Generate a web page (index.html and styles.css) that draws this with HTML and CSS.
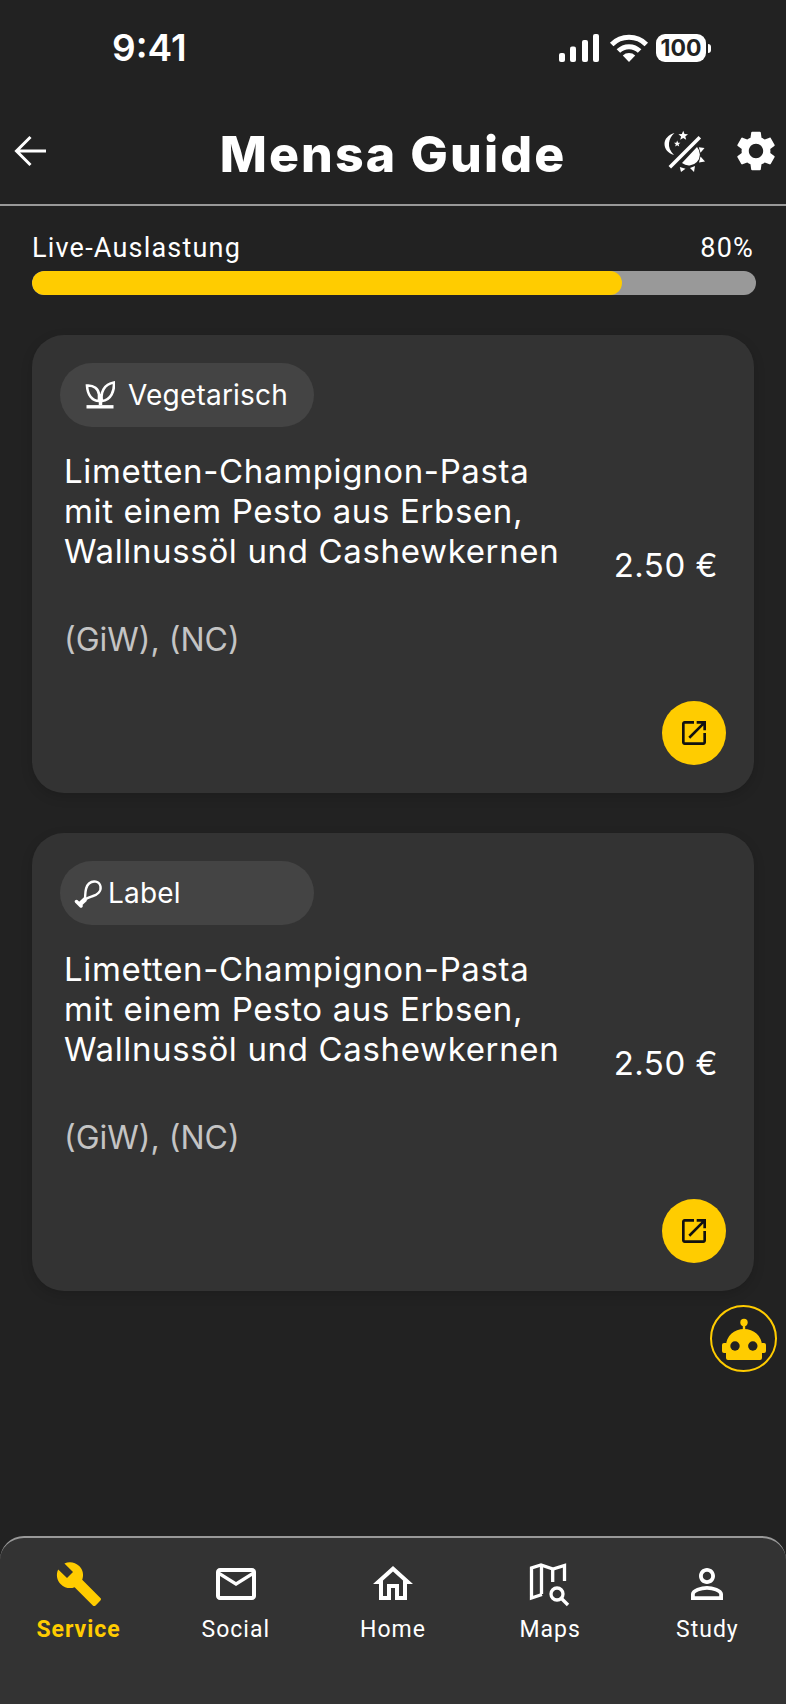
FILE: index.html
```html
<!DOCTYPE html>
<html lang="en">
<head>
    <meta charset="UTF-8">
    <meta name="viewport" content="width=device-width, initial-scale=1.0">
    <title>Mensa Guide</title>
    <link rel="stylesheet" href="styles.css">
</head>
<body>
    <div class="screen">
        <!-- Status bar -->
        <div class="status-bar">
            <span class="time">9:41</span>
            <div class="status-icons">
                <svg class="signal" width="40" height="28" viewBox="0 0 40 28" fill="#fff">
                    <rect x="0" y="19" width="6" height="9" rx="2"/>
                    <rect x="11" y="12.5" width="6" height="15.5" rx="2"/>
                    <rect x="23" y="6" width="6" height="22" rx="2"/>
                    <rect x="34" y="0" width="6" height="28" rx="2"/>
                </svg>
                <svg class="wifi" width="40" height="28" viewBox="0 0 40 28">
                    <path d="M2.7 10.4a24.5 24.5 0 0 1 34.6 0M9.4 17.1a15 15 0 0 1 21.2 0" fill="none" stroke="#fff" stroke-width="5"/>
                    <path d="M20 28l-6.2-6.6a9 9 0 0 1 12.4 0z" fill="#fff"/>
                </svg>
                <div class="battery">
                    <span class="battery-level">100</span>
                    <span class="battery-nub"></span>
                </div>
            </div>
        </div>

        <!-- Header -->
        <header class="app-header">
            <div class="header-left">
                <svg width="32" height="32" viewBox="0 0 32 32" fill="none" stroke="#fff" stroke-width="3">
                    <path d="M32 16H3M16.5 2L2.5 16l14 14"/>
                </svg>
            </div>
            <h1 class="app-title">Mensa Guide</h1>
            <div class="header-actions">
                <svg width="48" height="48" viewBox="0 0 48 48" fill="#fff">
                    <path d="M13.5 6C7 8 3.5 12 3.5 17c0 5 3.5 9 9.500 11C9 24 7.500 20 8 16c.5-4 2-7 5.500-10z"/>
                    <polygon points="22.2,3.800 23.500,7 27,7.200 24.300,9.400 25.200,12.800 22.200,11 19.200,12.800 20.100,9.400 17.400,7.200 20.900,7"/>
                    <polygon points="16.200,13.500 17.100,15.700 19.400,15.800 17.600,17.300 18.200,19.600 16.200,18.300 14.200,19.600 14.800,17.300 13,15.800 15.300,15.700"/>
                    <path d="M8.800 40.300l30-30" stroke="#fff" stroke-width="3.500"/>
                    <path d="M21 36l15-16a11 11 0 0 1-15 16z"/>
                    <polygon points="37.800,20.300 43.500,21 39.500,25.800"/>
                    <polygon points="39.500,29.500 44,34.500 38,35.500"/>
                    <polygon points="29,41 34,39 33,45"/>
                    <polygon points="18.800,40 24.500,41.700 20,45"/>
                </svg>
                <svg width="48" height="48" viewBox="0 0 24 24" fill="#fff">
                    <path d="M19.140 12.940c.04-.3.06-.61.06-.94 0-.32-.02-.64-.07-.94l2.030-1.580c.18-.14.23-.41.12-.61l-1.920-3.320c-.12-.22-.37-.29-.59-.22l-2.390.96c-.5-.38-1.030-.7-1.620-.94l-.36-2.540c-.04-.24-.24-.41-.48-.41h-3.840c-.24 0-.43.17-.47.41l-.36 2.540c-.59.24-1.130.57-1.620.94l-2.390-.96c-.22-.08-.47 0-.59.22L2.740 8.870c-.12.21-.08.47.12.61l2.030 1.580c-.05.3-.09.63-.09.94s.02.64.07.94l-2.030 1.580c-.18.14-.23.41-.12.61l1.920 3.320c.12.22.37.29.59.22l2.390-.96c.5.38 1.030.7 1.620.94l.36 2.540c.05.24.24.41.48.41h3.840c.24 0 .44-.17.47-.41l.36-2.540c.59-.24 1.130-.56 1.620-.94l2.390.96c.22.08.47 0 .59-.22l1.920-3.320c.12-.22.07-.47-.12-.61l-2.010-1.580zM12 15.600c-1.980 0-3.600-1.620-3.600-3.600s1.620-3.600 3.600-3.600 3.600 1.620 3.600 3.600-1.620 3.600-3.600 3.600z"/>
                </svg>
            </div>
        </header>

        <main class="content">
            <!-- Live usage -->
            <section class="usage">
                <div class="usage-row">
                    <span>Live-Auslastung</span>
                    <span>80%</span>
                </div>
                <div class="usage-track">
                    <div class="usage-fill" style="width: 81.5%"></div>
                </div>
            </section>

            <!-- Meal cards -->
            <article class="card">
                <div class="chip">
                    <svg width="30" height="28" viewBox="0 0 30 28" fill="none" stroke="#fff" stroke-width="2.600">
                        <path d="M2 4.500C9 4 13.500 8 14 13.500V20C7 20 2.500 14 2 4.500z"/>
                        <path d="M29 1.500C29.500 10 26 19 17 20c-2-8 2-17 12-18.500z"/>
                        <path d="M15.500 13v11" stroke-width="3.500"/>
                        <path d="M1.500 25.800h27" stroke-width="3.400"/>
                    </svg>
                    <span>Vegetarisch</span>
                </div>
                <div class="meal">
                    <div class="meal-text">
                        <p class="meal-name">Limetten-Champignon-Pasta<br>mit einem Pesto aus Erbsen,<br>Wallnussöl und Cashewkernen</p>
                        <p class="meal-tags">(GiW), (NC)</p>
                    </div>
                    <span class="meal-price">2.50 €</span>
                </div>
                <div class="card-footer">
                    <button class="open-btn">
                        <svg width="32" height="32" viewBox="0 0 24 24" fill="#111">
                            <path d="M19 19H5V5h7V3H5c-1.110 0-2 .9-2 2v14c0 1.100.89 2 2 2h14c1.100 0 2-.9 2-2v-7h-2v7zM14 3v2h3.590l-9.830 9.830 1.410 1.410L19 6.410V10h2V3h-7z"/>
                        </svg>
                    </button>
                </div>
            </article>

            <article class="card">
                <div class="chip chip-tight">
                    <svg width="30" height="29" viewBox="0 0 30 29" fill="none" stroke="#fff" stroke-width="2.400">
                        <path d="M11 20.500c.5-6-.5-12 4-16C19 1 25.500 2 26.500 7.500c1 5-3.500 8.500-7.500 9.500-3 1-5 1.500-8 3.500z"/>
                        <path d="M11.500 20l-6.500 6" stroke-width="4.500"/>
                        <path d="M2.500 22.500l4.500 4.500" stroke-width="3.500" stroke-linecap="round"/>
                    </svg>
                    <span>Label</span>
                </div>
                <div class="meal">
                    <div class="meal-text">
                        <p class="meal-name">Limetten-Champignon-Pasta<br>mit einem Pesto aus Erbsen,<br>Wallnussöl und Cashewkernen</p>
                        <p class="meal-tags">(GiW), (NC)</p>
                    </div>
                    <span class="meal-price">2.50 €</span>
                </div>
                <div class="card-footer">
                    <button class="open-btn">
                        <svg width="32" height="32" viewBox="0 0 24 24" fill="#111">
                            <path d="M19 19H5V5h7V3H5c-1.110 0-2 .9-2 2v14c0 1.100.89 2 2 2h14c1.100 0 2-.9 2-2v-7h-2v7zM14 3v2h3.590l-9.830 9.830 1.410 1.410L19 6.410V10h2V3h-7z"/>
                        </svg>
                    </button>
                </div>
            </article>
        </main>

        <!-- Floating assistant -->
        <button class="assistant">
            <svg width="64" height="64" viewBox="0 0 64 64" fill="#ffcc00">
                <circle cx="32" cy="15.500" r="3.700"/>
                <rect x="30.800" y="17" width="2.400" height="7"/>
                <path d="M14 51V38.500a18 16.500 0 0 1 36 0V51a2 2 0 0 1-2 2H16a2 2 0 0 1-2-2z"/>
                <rect x="10" y="36" width="6" height="10" rx="2"/>
                <rect x="48" y="36" width="6" height="10" rx="2"/>
                <circle cx="23" cy="39" r="4.700" fill="#222"/>
                <circle cx="40.800" cy="39" r="4.700" fill="#222"/>
            </svg>
        </button>

        <!-- Bottom navigation -->
        <nav class="bottom-nav">
            <div class="nav-item nav-item-active">
                <svg width="48" height="48" viewBox="0 0 24 24" fill="#ffcc00">
                    <path d="M22.700 19l-9.100-9.100c.9-2.300.4-5-1.500-6.900-2-2-5-2.400-7.400-1.300L9 6 6 9 1.600 4.700C.4 7.100.9 10.100 2.900 12.100c1.900 1.900 4.600 2.400 6.900 1.500l9.100 9.100c.4.4 1 .4 1.400 0l2.300-2.300c.5-.4.5-1.100.1-1.400z"/>
                </svg>
                <span>Service</span>
            </div>
            <div class="nav-item">
                <svg width="48" height="48" viewBox="0 0 24 24" fill="#fff">
                    <path d="M20 4H4c-1.100 0-2 .9-2 2v12c0 1.100.9 2 2 2h16c1.100 0 2-.9 2-2V6c0-1.100-.9-2-2-2zm0 14H4V8l8 5 8-5v10zm-8-7L4 6h16l-8 5z"/>
                </svg>
                <span>Social</span>
            </div>
            <div class="nav-item">
                <svg width="48" height="48" viewBox="0 0 24 24" fill="#fff">
                    <path d="M12 5.690l5 4.500V18h-2v-6H9v6H7v-7.810l5-4.500M12 3L2 12h3v8h6v-6h2v6h6v-8h3L12 3z"/>
                </svg>
                <span>Home</span>
            </div>
            <div class="nav-item">
                <svg width="48" height="48" viewBox="0 0 48 48" fill="none" stroke="#fff" stroke-width="3.300">
                    <path d="M16 34.500L5.500 38V8L15 5l12 4 11.500-3.500V21"/>
                    <path d="M15.500 5v29M26.700 9v13"/>
                    <circle cx="31" cy="34" r="6"/>
                    <path d="M35.500 38.500l6.500 6.500"/>
                </svg>
                <span>Maps</span>
            </div>
            <div class="nav-item">
                <svg width="48" height="48" viewBox="0 0 24 24" fill="#fff">
                    <path d="M12 5.900c1.160 0 2.100.94 2.100 2.100s-.94 2.100-2.100 2.100S9.900 9.160 9.900 8s.94-2.100 2.100-2.100m0 9c2.970 0 6.100 1.460 6.100 2.100v1.100H5.900V17c0-.64 3.130-2.100 6.100-2.100M12 4C9.790 4 8 5.790 8 8s1.790 4 4 4 4-1.790 4-4-1.790-4-4-4zm0 9c-2.670 0-8 1.340-8 4v3h16v-3c0-2.660-5.330-4-8-4z"/>
                </svg>
                <span>Study</span>
            </div>
        </nav>
    </div>
</body>
</html>
```

FILE: styles.css
```css
* {
    box-sizing: border-box;
}
body {
    margin: 0;
    background-color: #222;
    color: #fff;
    font-family: Inter, sans-serif;
}
p, h1 {
    margin: 0;
}
svg {
    display: block;
    flex-shrink: 0;
}
.screen {
    position: relative;
    width: 786px;
    height: 1704px;
    display: flex;
    flex-direction: column;
    overflow: hidden;
}

/* status bar */
.status-bar {
    height: 100px;
    padding: 34px 75px 0 112px;
    display: flex;
    justify-content: space-between;
    align-items: flex-start;
}
.time {
    font-size: 37px;
    font-weight: 600;
    line-height: 28px;
}
.status-icons {
    display: flex;
    align-items: center;
    gap: 10px;
}
.wifi {
    margin-right: -3px;
}
.battery {
    display: flex;
    align-items: center;
    gap: 2px;
}
.battery-level {
    width: 50px;
    height: 28px;
    border-radius: 9px;
    background-color: #fff;
    color: #222;
    font-size: 23px;
    font-weight: 700;
    line-height: 28px;
    text-align: center;
}
.battery-nub {
    width: 3px;
    height: 9px;
    border-radius: 0 3px 3px 0;
    background-color: #fff;
}

/* header */
.app-header {
    height: 106px;
    display: grid;
    grid-template-columns: 1fr auto 1fr;
    align-items: center;
    border-bottom: 2px solid #999;
    padding-bottom: 3px;
}
.header-left {
    padding-left: 14px;
}
.app-title {
    margin-top: 6px;
    font-size: 50px;
    font-weight: 800;
    letter-spacing: 2.1px;
    line-height: 60px;
}
.header-actions {
    display: flex;
    justify-content: flex-end;
    gap: 23px;
    padding-right: 6px;
}

/* usage */
.content {
    padding: 27px 32px 0;
}
.usage-row {
    display: flex;
    justify-content: space-between;
    font-family: Roboto, sans-serif;
    font-size: 27px;
    letter-spacing: 1.2px;
    line-height: 30px;
}
.usage-track {
    height: 24px;
    margin: 8px -2px 40px 0;
    border-radius: 12px;
    background-color: #999;
    overflow: hidden;
}
.usage-fill {
    height: 100%;
    border-radius: 12px;
    background-color: #ffcc00;
}

/* cards */
.card {
    height: 458px;
    margin-bottom: 40px;
    padding: 28px;
    border-radius: 32px;
    background-color: #333;
    box-shadow: 0 4px 12px rgba(0, 0, 0, 0.15);
}
.chip {
    width: 254px;
    height: 64px;
    padding-left: 25px;
    display: flex;
    align-items: center;
    gap: 13px;
    border-radius: 32px;
    background-color: #444;
    font-size: 28px;
    letter-spacing: 0.2px;
}
.chip-tight {
    padding-left: 14px;
    gap: 4px;
}
.meal {
    display: flex;
    justify-content: space-between;
    margin-top: 24px;
    padding: 0 8px 0 4px;
}
.meal-name {
    font-size: 33px;
    letter-spacing: 0.65px;
    line-height: 40px;
}
.meal-tags {
    margin-top: 49px;
    color: #c4c4c4;
    font-size: 32px;
    line-height: 40px;
}
.meal-price {
    margin-top: 94px;
    font-size: 33px;
    letter-spacing: 0.5px;
    line-height: 40px;
}
.card-footer {
    display: flex;
    justify-content: flex-end;
    margin-top: 41px;
}
.open-btn {
    width: 64px;
    height: 64px;
    padding: 0;
    display: flex;
    align-items: center;
    justify-content: center;
    border: none;
    border-radius: 50%;
    background-color: #ffcc00;
}

/* floating assistant button */
.assistant {
    position: absolute;
    top: 1305px;
    right: 9px;
    width: 67px;
    height: 67px;
    padding: 0;
    border: 2px solid #ffcc00;
    border-radius: 50%;
    background: none;
}

/* bottom nav */
.bottom-nav {
    margin-top: auto;
    height: 168px;
    display: grid;
    grid-template-columns: repeat(5, 1fr);
    padding-top: 22px;
    border-top: 2px solid #999;
    border-radius: 24px 24px 0 0;
    background-color: #333;
}
.nav-item {
    display: flex;
    flex-direction: column;
    align-items: center;
    gap: 7px;
    font-family: Roboto, sans-serif;
    font-size: 23px;
    letter-spacing: 1px;
    line-height: 30px;
}
.nav-item-active {
    color: #ffcc00;
    font-weight: 700;
}
```
